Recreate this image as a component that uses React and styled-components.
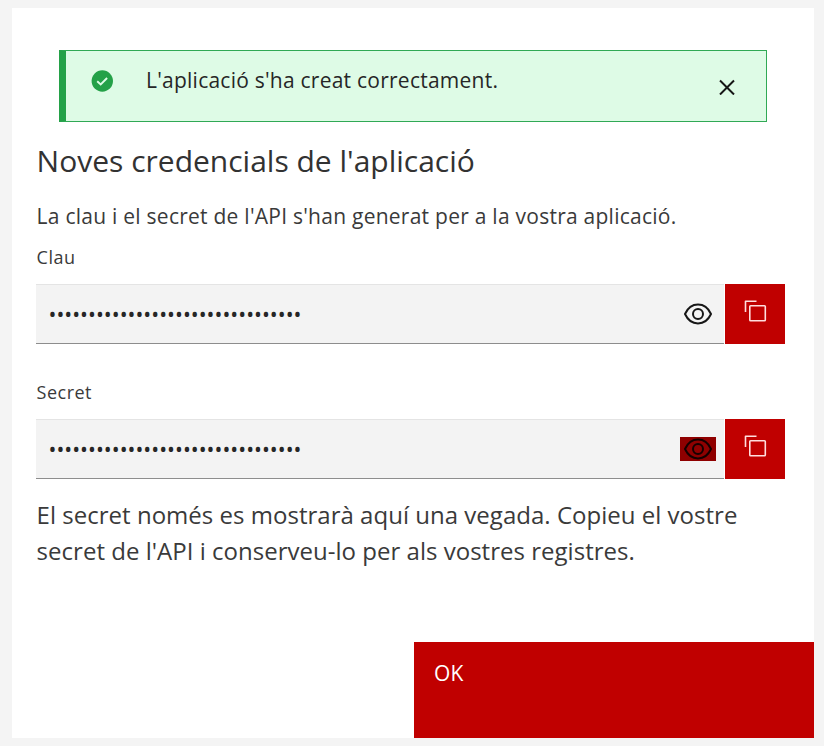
import React, { useState } from "react";
import styled, { createGlobalStyle, css } from "styled-components";

const GlobalStyle = createGlobalStyle`
  *, *::before, *::after { box-sizing: border-box; }
  body {
    margin: 0;
    background: #f4f4f4;
    font-family: "Open Sans", sans-serif;
    color: #3a3a3a;
  }
  h1, p { margin: 0; }
  button { border: 0; padding: 0; background: none; font: inherit; cursor: pointer; }
`;

const Page = styled.main`
  height: 746px;
  padding: 8px 10px 8px 12px;
  overflow: hidden;
`;

const Dialog = styled.section`
  display: flex;
  flex-direction: column;
  height: 730px;
  background: #fff;
`;

const Notification = styled.div`
  display: flex;
  align-items: flex-start;
  flex: none;
  width: 708px;
  height: 72px;
  margin: 42px 0 0 47px;
  padding-left: 24px;
  border: 1px solid #30a955;
  border-left: 7px solid #24a148;
  background: #defbe6;
`;

const StatusIcon = styled.svg`
  flex: none;
  width: 24px;
  height: 24px;
  margin: 18px 32px 0 0;
`;

const NotificationText = styled.p`
  flex: 1;
  margin-top: 14px;
  font-size: 21px;
  line-height: 30px;
  letter-spacing: 0.24px;
  color: #262626;
  white-space: nowrap;
`;

const CloseButton = styled.button`
  display: grid;
  place-items: center;
  width: 72px;
  height: 72px;
  margin-right: 3px;
  color: #161616;
`;

const Body = styled.div`
  flex: 1;
  padding: 20px 28px 0 24px;
`;

const Title = styled.h1`
  padding-left: 0.6px;
  font-size: 30px;
  font-weight: 400;
  line-height: 38px;
  color: #323232;
  white-space: nowrap;
`;

const Intro = styled.p`
  margin-top: 21px;
  padding-left: 0.6px;
  font-size: 21px;
  line-height: 30px;
  letter-spacing: 0.25px;
  white-space: nowrap;
`;

const Field = styled.div`
  margin-top: ${({ $gap }) => $gap}px;
`;

const FieldLabel = styled.div`
  height: 24px;
  margin-bottom: 15px;
  padding-left: 0.6px;
  font-size: 18px;
  line-height: 24px;
  letter-spacing: 0.48px;
`;

const FieldRow = styled.div`
  display: flex;
  gap: 1.4px;
  height: 60px;
`;

const SecretBox = styled.div`
  display: flex;
  align-items: center;
  justify-content: space-between;
  width: 688px;
  padding: 0 8.5px 0 12.5px;
  border-top: 1px solid #e4e4e4;
  border-bottom: 1px solid #8d8d8d;
  background: #f3f3f3;
`;

const Masked = styled.span`
  font-size: 21px;
  line-height: 30px;
  letter-spacing: 0.01px;
  color: #262626;
`;

const RevealButton = styled.button`
  display: grid;
  place-items: center;
  width: 36px;
  height: 24px;
  color: #161616;
  ${({ $active }) => $active && css`
    background: #8f0000;
    color: #160000;
  `}
`;

const CopyButton = styled.button`
  display: flex;
  justify-content: center;
  width: 60px;
  height: 60px;
  padding-top: 15px;
  background: #c00000;
  color: #ffdede;
`;

const Note = styled.p`
  margin-top: 18px;
  padding-left: 0.6px;
  font-size: 24px;
  line-height: 36px;
  letter-spacing: 0.02px;
  white-space: nowrap;
`;

const Footer = styled.footer`
  display: flex;
  justify-content: flex-end;
  height: 96px;
`;

const ConfirmButton = styled.button`
  display: flex;
  width: 400px;
  height: 96px;
  padding: 16px 20px;
  background: #c00000;
  color: #fff;
  font-size: 21px;
  line-height: 30px;
  letter-spacing: 0.24px;
`;

const EyeIcon = () => (
  <svg width="30" height="24" viewBox="0 0 30 24" fill="none" stroke="currentColor" strokeWidth="2">
    <path d="M2 12C5 5.500 10 2.600 15 2.600S25 5.500 28 12C25 18.500 20 21.400 15 21.400S5 18.500 2 12Z" strokeLinejoin="round" />
    <circle cx="15" cy="12" r="5" />
  </svg>
);

const CopyIcon = () => (
  <svg width="24" height="24" viewBox="0 0 24 24" fill="none" stroke="currentColor" strokeWidth="1.600">
    <rect x="6.800" y="6.800" width="15.500" height="15" rx="0.800" />
    <path d="M2.500 13V2.200H13.500" strokeLinejoin="round" />
  </svg>
);

const CheckIcon = () => (
  <StatusIcon viewBox="0 0 24 24">
    <circle cx="12.300" cy="12" r="10.700" fill="#24a148" />
    <path d="M7.200 12.200l3.500 3.300 6.400-6.500" fill="none" stroke="#defbe6" strokeWidth="1.900" />
  </StatusIcon>
);

const CloseIcon = () => (
  <svg width="16" height="16" viewBox="0 0 16 16" fill="none" stroke="currentColor" strokeWidth="2">
    <path d="M1 1.500l14 14M15 1.500L1 15.500" />
  </svg>
);

const MASK = "•".repeat(32);

function SecretField({ label, gap, active }) {
  return (
    <Field $gap={gap}>
      <FieldLabel>{label}</FieldLabel>
      <FieldRow>
        <SecretBox>
          <Masked>{MASK}</Masked>
          <RevealButton $active={active}><EyeIcon /></RevealButton>
        </SecretBox>
        <CopyButton><CopyIcon /></CopyButton>
      </FieldRow>
    </Field>
  );
}

export default function App() {
  const [notice, setNotice] = useState(true);
  return (
    <Page>
      <GlobalStyle />
      <Dialog>
        {notice && (
          <Notification>
            <CheckIcon />
            <NotificationText>L'aplicació s'ha creat correctament.</NotificationText>
            <CloseButton onClick={() => setNotice(false)}><CloseIcon /></CloseButton>
          </Notification>
        )}
        <Body>
          <Title>Noves credencials de l'aplicació</Title>
          <Intro>La clau i el secret de l'API s'han generat per a la vostra aplicació.</Intro>
          <SecretField label="Clau" gap={14} />
          <SecretField label="Secret" gap={36} active />
          <Note>
            El secret només es mostrarà aquí una vegada. Copieu el vostre
            <br />
            secret de l'API i conserveu-lo per als vostres registres.
          </Note>
        </Body>
        <Footer>
          <ConfirmButton>OK</ConfirmButton>
        </Footer>
      </Dialog>
    </Page>
  );
}
